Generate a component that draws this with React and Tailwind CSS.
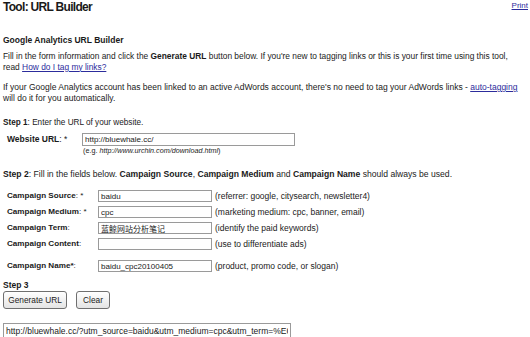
import React from "react";

const sans = "font-['Liberation_Sans',Arial,sans-serif]";

function Field({ label, req, value, hint, cjk }) {
  return (
    <div className="flex items-center h-[12px]">
      <div className="w-[98px] shrink-0 pl-[7px] text-[8.1px] leading-[12px] whitespace-nowrap">
        <span className="font-bold">{label}</span>
        {req}
      </div>
      <input
        readOnly
        value={value}
        className={`w-[114px] h-[12px] shrink-0 border border-[#9a9a9a] bg-white px-[2px] text-[8px] leading-[10px] outline-none ${
          cjk ? "font-['Liberation_Sans','Noto_Sans_CJK_SC',sans-serif]" : sans
        }`}
      />
      <div className="pl-[3px] text-[8.5px] leading-[12px] whitespace-nowrap">{hint}</div>
    </div>
  );
}

export default function App() {
  return (
    <div className={`w-[530px] h-[337px] overflow-hidden bg-white text-[#1a1a1a] ${sans}`}>
      <div className="flex justify-between items-start pl-[3px] pr-[2px]">
        <div className="text-[12px] font-bold leading-[14px] tracking-[-0.7px]">Tool: URL Builder</div>
        <a className="text-[8px] leading-[10px] mt-[1px] text-[#2c2c9c] underline">Print</a>
      </div>

      <div className="px-[3px]">
        <div className="mt-[21px] text-[8.5px] font-bold leading-[11px]">Google Analytics URL Builder</div>

        <p className="mt-[5px] text-[8.4px] leading-[10.5px] whitespace-nowrap">
          Fill in the form information and click the <b>Generate URL</b> button below. If you're new to tagging links or this
          is your first time using this tool,
          <br />
          read <a className="text-[#2c2c9c] underline">How do I tag my links?</a>
        </p>

        <p className="mt-[10px] text-[8.5px] leading-[11px] whitespace-nowrap">
          If your Google Analytics account has been linked to an active AdWords account, there's no need to tag your AdWords
          links - <a className="text-[#2c2c9c] underline">auto-tagging</a>
          <br />
          will do it for you automatically.
        </p>

        <p className="mt-[13px] text-[8.2px] leading-[11px]">
          <b>Step 1</b>: Enter the URL of your website.
        </p>
      </div>

      <div className="mt-[5px] flex">
        <div className="w-[82px] shrink-0 pl-[7px] pt-[1px] text-[8.5px] leading-[11px] whitespace-nowrap">
          <span className="font-bold">Website URL</span>: *
        </div>
        <div className="flex flex-col">
          <input
            readOnly
            value="http://bluewhale.cc/"
            className={`w-[213px] h-[13px] border border-[#9a9a9a] px-[2px] text-[8px] leading-[11px] outline-none ${sans}`}
          />
          <div className="text-[7.2px] leading-[9px] pl-[1px]">
            (e.g. <i>http://www.urchin.com/download.html</i>)
          </div>
        </div>
      </div>

      <p className="mt-[14px] px-[3px] text-[8.6px] leading-[11px] whitespace-nowrap">
        <b>Step 2</b>: Fill in the fields below. <b>Campaign Source</b>, <b>Campaign Medium</b> and <b>Campaign Name</b>{" "}
        should always be used.
      </p>

      <div className="mt-[10px] flex flex-col gap-[4px]">
        <Field label="Campaign Source" req=": *" value="baidu" hint="(referrer: google, citysearch, newsletter4)" />
        <Field label="Campaign Medium" req=": *" value="cpc" hint="(marketing medium: cpc, banner, email)" />
        <Field label="Campaign Term" req=":" value="蓝鲸网站分析笔记" hint="(identify the paid keywords)" cjk />
        <Field label="Campaign Content" req=":" value="" hint="(use to differentiate ads)" />
        <div className="mt-[6px]">
          <Field label="Campaign Name*" req=":" value="baidu_cpc20100405" hint="(product, promo code, or slogan)" />
        </div>
      </div>

      <div className="px-[3px]">
        <div className="mt-[8px] text-[8.5px] font-bold leading-[11px]">Step 3</div>
        <div className="flex gap-[9px]">
          <button className="h-[18px] w-[64px] rounded-[3px] border border-[#6f6f6f] bg-gradient-to-b from-white to-[#e4e4e4] text-[8.3px] leading-[16px] text-[#1a1a1a]">
            Generate URL
          </button>
          <button className="h-[18px] w-[34px] rounded-[3px] border border-[#6f6f6f] bg-gradient-to-b from-white to-[#e4e4e4] text-[8.3px] leading-[16px] text-[#1a1a1a]">
            Clear
          </button>
        </div>
        <input
          readOnly
          value="http://bluewhale.cc/?utm_source=baidu&utm_medium=cpc&utm_term=%E6%B5%93%E9%B2%B8"
          className={`mt-[14px] w-[288px] h-[15px] border border-[#9a9a9a] px-[2px] text-[8.5px] leading-[13px] outline-none ${sans}`}
        />
      </div>
    </div>
  );
}
